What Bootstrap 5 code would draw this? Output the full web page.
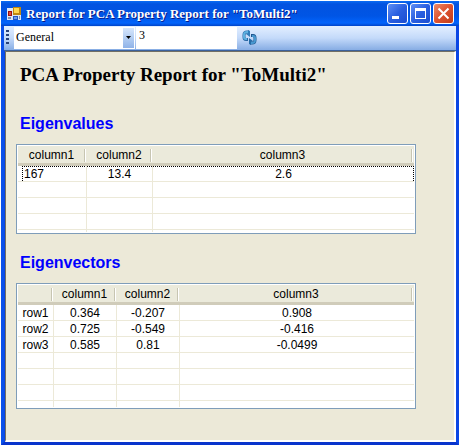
<!DOCTYPE html>
<html lang="en">
<head>
<meta charset="utf-8">
<meta name="viewport" content="width=device-width, initial-scale=1">
<title>Report for PCA Property Report for "ToMulti2"</title>
<link href="https://cdn.jsdelivr.net/npm/bootstrap@5.3.0/dist/css/bootstrap.min.css" rel="stylesheet">
<style>
body { background: #fff; padding: 1px 0 1px 1px; font: 12px/16px "Liberation Sans", Arial, sans-serif; color: #000; }
.window-frame { min-height: calc(100vh - 2px); background: #0a46e4; border: solid #0a46e4; border-width: 0 3px 3px; border-left-color: #0a50ea; border-bottom-color: #0834cc; }
.title-bar { height: 25px; margin: 0 -3px; padding: 0 5px 0 6px; background: linear-gradient(#0a6cf4 0, #0353e0 12%, #0055e5 60%, #0264fc 88%, #0144c8 100%); color: #fff; }
.title-text { font: bold 13px/24px "Liberation Serif", "Times New Roman", serif; margin-left: 5px; text-shadow: 1px 1px #0a1883; }
.caption-group { gap: 2px; }
.caption-btn { width: 21px; height: 21px; padding: 0; border: 1px solid #fff; border-radius: 3px; background: linear-gradient(135deg, #5f8ff5, #2a5fe0 50%, #1a4cd0); line-height: 0; }
.caption-btn svg { display: block; margin: auto; }
.caption-close { background: linear-gradient(135deg, #ec8a68, #dc5230 50%, #c03c18); }
.tool-strip { height: 25px; padding: 0 0 1px 1px; background: linear-gradient(#e3efff, #c4dafa 50%, #87ade4); border-bottom: 1px solid #3b619c; }
.grip { width: 3px; height: 15px; margin: 0 5px 0 1px; background: repeating-linear-gradient(#27417a 0 2px, transparent 2px 4px); }
.tool-field { font: 12px/14px "Liberation Serif", "Times New Roman", serif; height: 22px; border: 0; border-radius: 0; background: #fff; color: #000; outline-offset: -1px; }
.combo { width: 121px; }
.combo select { appearance: none; width: 100%; padding: 0 14px 2px 2px; }
.combo-arrow { right: 1px; top: 1px; width: 11px; height: 20px; background: linear-gradient(#d6e6fc, #8fb3e8); pointer-events: none; }
.value-field { width: 101px; margin-left: 1px; padding: 0 3px 4px; }
.refresh-btn { margin-left: 5px; padding: 0; border: 0; background: none; line-height: 0; }
.report-pane { background: #ece9d8; border: solid #fff; border-width: 1px 2px 2px 1px; border-top-color: #716f64; border-left-color: #716f64; margin-left: 1px; padding: 12px 38px 28px 10px; }
.report-title { font: bold 19px/22px "Liberation Serif", "Times New Roman", serif; margin: 0 0 28px 4px; white-space: nowrap; }
.section-title { font: bold 16px/20px "Liberation Sans", Arial, sans-serif; color: #00f; margin: 0 0 10px 4px; }
.grid-box { background: #fff; border: 1px solid #7f9db9; padding: 1px; }
.grid-box + .section-title { margin-top: 19px; }
.grid-table { table-layout: fixed; width: 100%; border-collapse: separate; border-spacing: 0; text-align: center; }
.grid-table thead th { height: 20px; padding: 1px 2px 0 0; font-weight: 400; line-height: 16px; vertical-align: top; border-bottom: 3px solid #d0ccba;
  background: linear-gradient(#c7c5b2, #c7c5b2) right 2px top 3px / 1px 13px no-repeat, linear-gradient(#fff, #fff) right 1px top 3px / 1px 13px no-repeat, #ebeadb; }
.grid-table tbody td, .grid-table tbody th { height: 16px; padding: 1px 0 0; font-weight: 400; line-height: 14px; border-right: 1px solid #ece9d8; border-bottom: 1px solid #ece9d8; }
.grid-table tr > :last-child { border-right: 0; }
.grid-table .tail-row td { height: 2px; border-bottom: 0; }
.grid-table .tail-tall td { height: 6px; }
.focused-row td { background: repeating-linear-gradient(90deg, #000 0 1px, #fff 1px 2px) top / 100% 1px no-repeat; }
.focused-row td:first-child { text-align: left; padding-left: 6px !important; background: repeating-linear-gradient(90deg, #000 0 1px, #fff 1px 2px) 4px 0 / 100% 1px no-repeat, repeating-linear-gradient(#000 0 1px, #fff 1px 2px) 4px 0 / 1px 100% no-repeat; }
.focused-row td:last-child { background: repeating-linear-gradient(90deg, #000 0 1px, #fff 1px 2px) top / 100% 1px no-repeat, repeating-linear-gradient(#000 0 1px, #fff 1px 2px) right / 1px 100% no-repeat; }
.w-a { width: 69px; } .w-b { width: 66px; } .w-name { width: 36px; } .w-c { width: 63px; }
</style>
</head>
<body>
<div class="window-frame d-flex flex-column">
  <header class="title-bar d-flex align-items-center">
    <svg class="flex-shrink-0" width="14" height="14" viewBox="0 0 14 14" aria-hidden="true">
      <path fill="#dde6f4" d="M0 1h14v12H0z"/>
      <path fill="#a01010" d="M1 4h4v5H1z"/><path fill="#e05038" d="M2 5h2v3H2z"/>
      <path fill="#c08810" d="M6 0h8v8H6z"/><path fill="#ffd850" d="M7 1h5v5H7z"/>
      <path fill="#2858c0" d="M6 9h5v4H6z"/><path fill="#6c9cf0" d="M7 10h3v2H7z"/>
      <path fill="#8090b0" d="M1 10h3v2H1zM12 9h1v3h-1z"/>
    </svg>
    <div class="title-text flex-grow-1 text-nowrap">Report for PCA Property Report for "ToMulti2"</div>
    <div class="caption-group d-flex flex-shrink-0">
      <button type="button" class="caption-btn" aria-label="Minimize"><svg width="19" height="19"><path fill="#fff" d="M4 12h7v3H4z"/></svg></button>
      <button type="button" class="caption-btn" aria-label="Maximize"><svg width="19" height="19"><path fill="#fff" fill-rule="evenodd" d="M4 4h11v11H4zM5 7v7h9V7z"/></svg></button>
      <button type="button" class="caption-btn caption-close" aria-label="Close"><svg width="19" height="19"><path stroke="#fff" stroke-width="2" d="M4.500 4.500l10 10m0-10l-10 10"/></svg></button>
    </div>
  </header>
  <div class="tool-strip d-flex align-items-center" role="toolbar" aria-label="Report options">
    <span class="grip"></span>
    <div class="combo position-relative">
      <select class="tool-field d-block" aria-label="Number format"><option>General</option></select>
      <span class="combo-arrow position-absolute d-flex align-items-center justify-content-center"><svg width="5" height="3"><path d="M0 0h5L2.500 3z"/></svg></span>
    </div>
    <input class="tool-field value-field" type="text" value="3" aria-label="Precision">
    <button type="button" class="refresh-btn" aria-label="Refresh">
      <svg width="15" height="15" viewBox="0 0 15 15" fill="none">
        <path stroke="#2a68a4" stroke-width="3" d="M6 9.500H4Q2 9.500 2 7V5q0-3 3-3h2"/>
        <path stroke="#5cb0e0" stroke-width="2" d="M5 9H4Q2 9 2 7V5q0-3 3-3h1"/>
        <path fill="#2f7cba" d="M6 0l2 1v6L4 4l2-1z"/>
        <path stroke="#1f568e" stroke-width="3" d="M9 5.500h2q2 0 2 2.500v2q0 3-3 3H8"/>
        <path stroke="#4898d0" stroke-width="2" d="M10 6h1q2 0 2 2v2q0 3-3 3H9"/>
        <path fill="#246ca8" d="M9 15l-2-1V8l4 3-2 1z"/>
      </svg>
    </button>
  </div>
  <main class="report-pane flex-grow-1">
    <h1 class="report-title">PCA Property Report for "ToMulti2"</h1>
    <h2 class="section-title" id="values-title">Eigenvalues</h2>
    <div class="grid-box">
      <table class="grid-table" aria-labelledby="values-title">
        <colgroup><col class="w-a"><col class="w-b"><col></colgroup>
        <thead><tr><th scope="col">column1</th><th scope="col">column2</th><th scope="col">column3</th></tr></thead>
        <tbody>
          <tr class="focused-row"><td>167</td><td>13.4</td><td>2.6</td></tr>
          <tr><td></td><td></td><td></td></tr>
          <tr><td></td><td></td><td></td></tr>
          <tr><td></td><td></td><td></td></tr>
          <tr class="tail-row"><td></td><td></td><td></td></tr>
        </tbody>
      </table>
    </div>
    <h2 class="section-title" id="vectors-title">Eigenvectors</h2>
    <div class="grid-box">
      <table class="grid-table" aria-labelledby="vectors-title">
        <colgroup><col class="w-name"><col class="w-c"><col class="w-c"><col></colgroup>
        <thead><tr><th></th><th scope="col">column1</th><th scope="col">column2</th><th scope="col">column3</th></tr></thead>
        <tbody>
          <tr><th scope="row">row1</th><td>0.364</td><td>-0.207</td><td>0.908</td></tr>
          <tr><th scope="row">row2</th><td>0.725</td><td>-0.549</td><td>-0.416</td></tr>
          <tr><th scope="row">row3</th><td>0.585</td><td>0.81</td><td>-0.0499</td></tr>
          <tr><td></td><td></td><td></td><td></td></tr>
          <tr><td></td><td></td><td></td><td></td></tr>
          <tr><td></td><td></td><td></td><td></td></tr>
          <tr class="tail-row tail-tall"><td></td><td></td><td></td><td></td></tr>
        </tbody>
      </table>
    </div>
  </main>
</div>
<script src="https://cdn.jsdelivr.net/npm/bootstrap@5.3.0/dist/js/bootstrap.bundle.min.js"></script>
</body>
</html>
